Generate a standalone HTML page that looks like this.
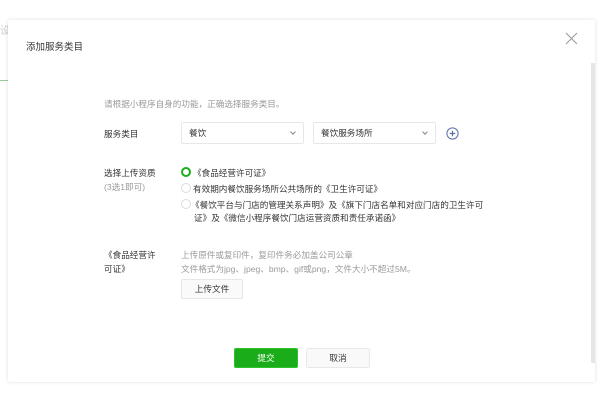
<!DOCTYPE html>
<html><head><meta charset="utf-8"><style>
*{margin:0;padding:0;box-sizing:border-box}
body{width:600px;height:400px;background:#fff;position:relative;overflow:hidden;font-family:"Liberation Sans","Noto Sans CJK SC",sans-serif;font-size:8.6px;color:#353535}
.modal{position:absolute;left:8px;top:20px;width:587px;height:362px;background:#fff;box-shadow:0 0 4px rgba(0,0,0,.12);border-radius:2px}
.a{position:absolute;white-space:nowrap}
.sel{position:absolute;height:22px;border:1px solid #e4e8eb;border-radius:2px;padding-left:7px;line-height:20px;font-size:8.6px}
.sel i{position:absolute;right:8px;top:7px;width:4px;height:4px;border-right:1px solid #888;border-bottom:1px solid #888;transform:rotate(45deg)}
.rad{position:absolute;width:10px;height:10px;border-radius:50%;border:1px solid #ddd}
.btn{position:absolute;height:20px;border-radius:2px;text-align:center;line-height:18px;font-size:8.6px}
.g{color:#9a9a9a}
</style></head><body>
<div class="a g" style="left:0;top:22px;font-size:10px;color:#ccc">设</div>
<div class="a" style="left:0;top:80px;width:8px;height:1px;background:#9c9"></div>
<div class="modal">
<div style="position:absolute;right:0;top:43px;width:4px;height:300px;background:#e6e6e6"></div>
</div>
<div class="a" style="left:26px;top:39px;font-size:9.5px;color:#353535">添加服务类目</div>
<svg class="a" style="left:565px;top:32px" width="13" height="13"><path d="M1 1L12 12M12 1L1 12" stroke="#999" stroke-width="1"/></svg>
<div class="a g" style="left:104px;top:98px">请根据小程序自身的功能，正确选择服务类目。</div>
<div class="a" style="left:104px;top:128px">服务类目</div>
<div class="sel" style="left:181px;top:122px;width:123px">餐饮<i></i></div>
<div class="sel" style="left:313px;top:122px;width:123px">餐饮服务场所<i></i></div>
<svg class="a" style="left:446px;top:127px" width="13" height="13"><circle cx="6.5" cy="6.5" r="5.6" fill="none" stroke="#5a6ea8" stroke-width="1"/><path d="M6.5 3.8V9.2M3.8 6.5H9.2" stroke="#5a6ea8" stroke-width="1.2"/></svg>
<div class="a" style="left:104px;top:167px">选择上传资质</div>
<div class="a g" style="left:104px;top:181px">(3选1即可)</div>
<div class="rad" style="left:181px;top:167px;border:2.5px solid #1aad19"></div>
<div class="a" style="left:193px;top:167px">《食品经营许可证》</div>
<div class="rad" style="left:181px;top:183px"></div>
<div class="a" style="left:193px;top:183px">有效期内餐饮服务场所公共场所的《卫生许可证》</div>
<div class="rad" style="left:181px;top:199px"></div>
<div class="a" style="left:191px;top:199px">《餐饮平台与门店的管理关系声明》及《旗下门店名单和对应门店的卫生许可</div>
<div class="a" style="left:194px;top:212px">证》及《微信小程序餐饮门店运营资质和责任承诺函》</div>
<div class="a" style="left:104px;top:249px">《食品经营许</div>
<div class="a" style="left:104px;top:263px">可证》</div>
<div class="a g" style="left:181px;top:249px">上传原件或复印件，复印件务必加盖公司公章</div>
<div class="a g" style="left:181px;top:263px">文件格式为jpg、jpeg、bmp、gif或png，文件大小不超过5M。</div>
<div class="btn" style="left:181px;top:279px;width:62px;border:1px solid #e4e8eb;background:#fafafa">上传文件</div>
<div class="btn" style="left:234px;top:348px;width:64px;background:#1aad19;color:#fff;border:1px solid #2bc42a">提交</div>
<div class="btn" style="left:306px;top:348px;width:64px;background:#f9f9f9;border:1px solid #e8e8e8">取消</div>
</body></html>
